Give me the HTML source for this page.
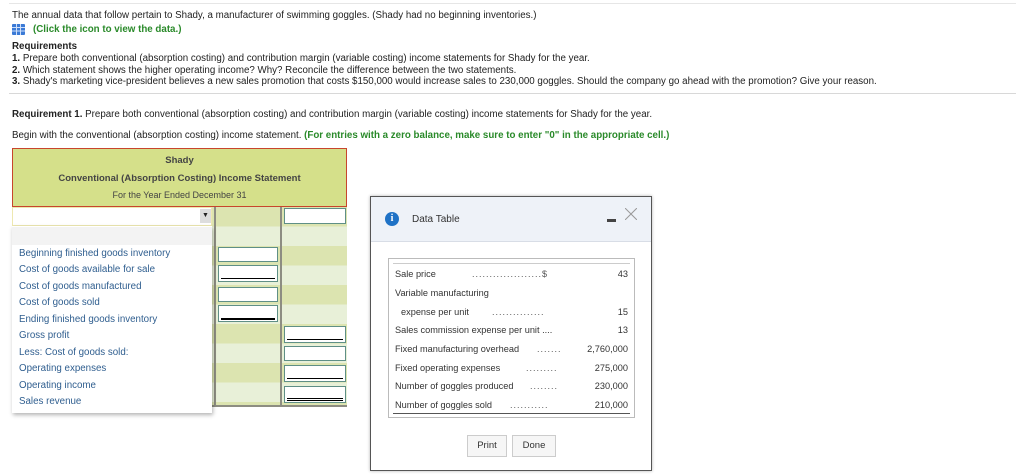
<!DOCTYPE html>
<html><head><meta charset="utf-8"><style>
*{margin:0;padding:0;box-sizing:border-box}
body{width:1024px;height:474px;background:#fff;font-family:"Liberation Sans",Arial,sans-serif;font-size:9.75px;color:#222;position:relative;overflow:hidden}
.a{position:absolute;white-space:nowrap}
.g{color:#2a8a2a;font-weight:bold}
.hr{position:absolute;left:9px;right:8px;height:1px;background:#d8d8d8}
.inp{position:absolute;background:#fff;border:1px solid #5f8f86}
.inp .u{position:absolute;left:2px;right:2px;height:1px;background:#000}
.li{position:absolute;left:19px;color:#2f5e8f;font-size:9.75px}
.dt{position:absolute;font-size:9.2px;color:#333;white-space:nowrap}
.dots{position:absolute;font-size:9px;color:#555;letter-spacing:1px}
.num{position:absolute;font-size:9.2px;color:#333;text-align:right}
</style></head><body>
<div class="hr" style="top:3px;background:#e6e6e6"></div>
<div class="a" style="left:12px;top:10px">The annual data that follow pertain to Shady, a manufacturer of swimming goggles. (Shady had no beginning inventories.)</div>
<svg class="a" style="left:12px;top:24px" width="13" height="11"><rect x="0" y="0" width="13" height="11" rx="1" fill="#3b7ad6"/><g stroke="#cfe0fa" stroke-width="1"><line x1="0" y1="3.5" x2="13" y2="3.5"/><line x1="0" y1="7" x2="13" y2="7"/><line x1="4.5" y1="0" x2="4.5" y2="11"/><line x1="8.5" y1="0" x2="8.5" y2="11"/></g></svg>
<div class="a g" style="left:33px;top:24px">(Click the icon to view the data.)</div>
<div class="a" style="left:12px;top:41px;font-weight:bold">Requirements</div>
<div class="a" style="left:12px;top:53px"><b>1.</b> Prepare both conventional (absorption costing) and contribution margin (variable costing) income statements for Shady for the year.</div>
<div class="a" style="left:12px;top:65px"><b>2.</b> Which statement shows the higher operating income? Why? Reconcile the difference between the two statements.</div>
<div class="a" style="left:12px;top:76px"><b>3.</b> Shady's marketing vice-president believes a new sales promotion that costs $150,000 would increase sales to 230,000 goggles. Should the company go ahead with the promotion? Give your reason.</div>
<div class="hr" style="top:93px"></div>
<div class="a" style="left:12px;top:109px"><b>Requirement 1.</b> Prepare both conventional (absorption costing) and contribution margin (variable costing) income statements for Shady for the year.</div>
<div class="a" style="left:12px;top:130px">Begin with the conventional (absorption costing) income statement. <span class="g">(For entries with a zero balance, make sure to enter "0" in the appropriate cell.)</span></div>

<div class="a" style="left:12px;top:148px;width:335px;height:59px;background:#d5e08a;border:1px solid #c8452c;text-align:center;color:#444">
<div style="margin-top:6px;font-weight:bold;font-size:9.5px">Shady</div>
<div style="margin-top:7px;font-weight:bold;font-size:9.5px">Conventional (Absorption Costing) Income Statement</div>
<div style="margin-top:6px;font-size:9px">For the Year Ended December 31</div>
</div>
<div class="a" style="left:12px;top:207px;width:335px;height:200px;background:repeating-linear-gradient(#dce4b0 0 19.5px,#e8f0d8 19.5px 39px);border-bottom:2px solid #8d8d82"></div>
<div class="a" style="left:214px;top:207px;width:2px;height:200px;background:#8d8d82"></div>
<div class="a" style="left:280px;top:207px;width:2px;height:200px;background:#8d8d82"></div>
<div class="a" style="left:12px;top:207px;width:200px;height:19px;background:#fff;border:1px solid #eee8b0"></div>
<div class="a" style="left:200px;top:209px;width:11px;height:14px;background:#ddd;font-size:7px;text-align:center;line-height:14px">▼</div>
<div class="a" style="left:12px;top:226px;width:200px;height:187px;background:#fff;box-shadow:1px 2px 4px rgba(0,0,0,.3)"></div>
<div class="a" style="left:12px;top:227px;width:200px;height:18px;background:#f3f3f3"></div>
<div class="li" style="top:248px">Beginning finished goods inventory</div>
<div class="li" style="top:264px">Cost of goods available for sale</div>
<div class="li" style="top:281px">Cost of goods manufactured</div>
<div class="li" style="top:297px">Cost of goods sold</div>
<div class="li" style="top:314px">Ending finished goods inventory</div>
<div class="li" style="top:330px">Gross profit</div>
<div class="li" style="top:347px">Less: Cost of goods sold:</div>
<div class="li" style="top:363px">Operating expenses</div>
<div class="li" style="top:380px">Operating income</div>
<div class="li" style="top:396px">Sales revenue</div>
<div class="inp" style="left:218px;top:247px;width:60px;height:15px"></div>
<div class="inp" style="left:218px;top:265px;width:60px;height:17px"><div class="u" style="top:12px"></div></div>
<div class="inp" style="left:218px;top:287px;width:60px;height:15px"></div>
<div class="inp" style="left:218px;top:305px;width:60px;height:17px"><div class="u" style="top:12px;height:1.5px"></div></div>
<div class="inp" style="left:284px;top:208px;width:62px;height:16px"></div>
<div class="inp" style="left:284px;top:326px;width:62px;height:17px"><div class="u" style="top:12px"></div></div>
<div class="inp" style="left:284px;top:346px;width:62px;height:15px"></div>
<div class="inp" style="left:284px;top:365px;width:62px;height:17px"><div class="u" style="top:12px"></div></div>
<div class="inp" style="left:284px;top:386px;width:62px;height:17px"><div class="u" style="top:11px"></div><div class="u" style="top:13px"></div></div>

<div class="a" style="left:370px;top:196px;width:282px;height:275px;background:#fff;border:1px solid #555;box-shadow:0 0 3px rgba(0,0,0,.3)">
<div style="position:absolute;left:0;top:0;right:0;height:45px;background:#eef2f8;border-bottom:1px solid #d8dde6"></div>
<div style="position:absolute;left:14px;top:15px;width:14px;height:14px;border-radius:50%;background:#1f72c6;color:#fff;font-weight:bold;font-size:10px;text-align:center;line-height:14px;font-family:'Liberation Serif',serif">i</div>
<div style="position:absolute;left:41px;top:17px;font-size:10px;color:#333">Data Table</div>
<div style="position:absolute;left:236px;top:22px;width:9px;height:2.5px;background:#444"></div>
<svg style="position:absolute;left:254px;top:11px" width="12" height="12"><path d="M0 0L12 12M12 0L0 12" stroke="#999" stroke-width="1"/></svg>
<div style="position:absolute;left:17px;top:61px;width:247px;height:160px;border:1px solid #bbb"></div>
<div style="position:absolute;left:22px;top:66px;width:237px;height:1px;background:#ccc"></div>
<div style="position:absolute;left:22px;top:216px;width:237px;height:1px;background:#555"></div>
</div>
<div class="dt" style="left:395px;top:269px">Sale price</div><div class="dots" style="left:472px;top:269px">....................$</div><div class="num" style="top:269px;right:396px">43</div>
<div class="dt" style="left:395px;top:288px">Variable manufacturing</div>
<div class="dt" style="left:401px;top:307px">expense per unit</div><div class="dots" style="left:492px;top:307px">...............</div><div class="num" style="top:307px;right:396px">15</div>
<div class="dt" style="left:395px;top:325px">Sales commission expense per unit ....</div><div class="num" style="top:325px;right:396px">13</div>
<div class="dt" style="left:395px;top:344px">Fixed manufacturing overhead</div><div class="dots" style="left:537px;top:344px">.......</div><div class="num" style="top:344px;right:396px">2,760,000</div>
<div class="dt" style="left:395px;top:363px">Fixed operating expenses</div><div class="dots" style="left:526px;top:363px">.........</div><div class="num" style="top:363px;right:396px">275,000</div>
<div class="dt" style="left:395px;top:381px">Number of goggles produced</div><div class="dots" style="left:530px;top:381px">........</div><div class="num" style="top:381px;right:396px">230,000</div>
<div class="dt" style="left:395px;top:400px">Number of goggles sold</div><div class="dots" style="left:510px;top:400px">...........</div><div class="num" style="top:400px;right:396px">210,000</div>
<div class="a" style="left:467px;top:435px;width:40px;height:22px;border:1px solid #ccc;background:#f6f6f6;font-size:9.5px;text-align:center;line-height:20px;color:#333">Print</div>
<div class="a" style="left:512px;top:435px;width:44px;height:22px;border:1px solid #ccc;background:#f6f6f6;font-size:9.5px;text-align:center;line-height:20px;color:#333">Done</div>
</body></html>
